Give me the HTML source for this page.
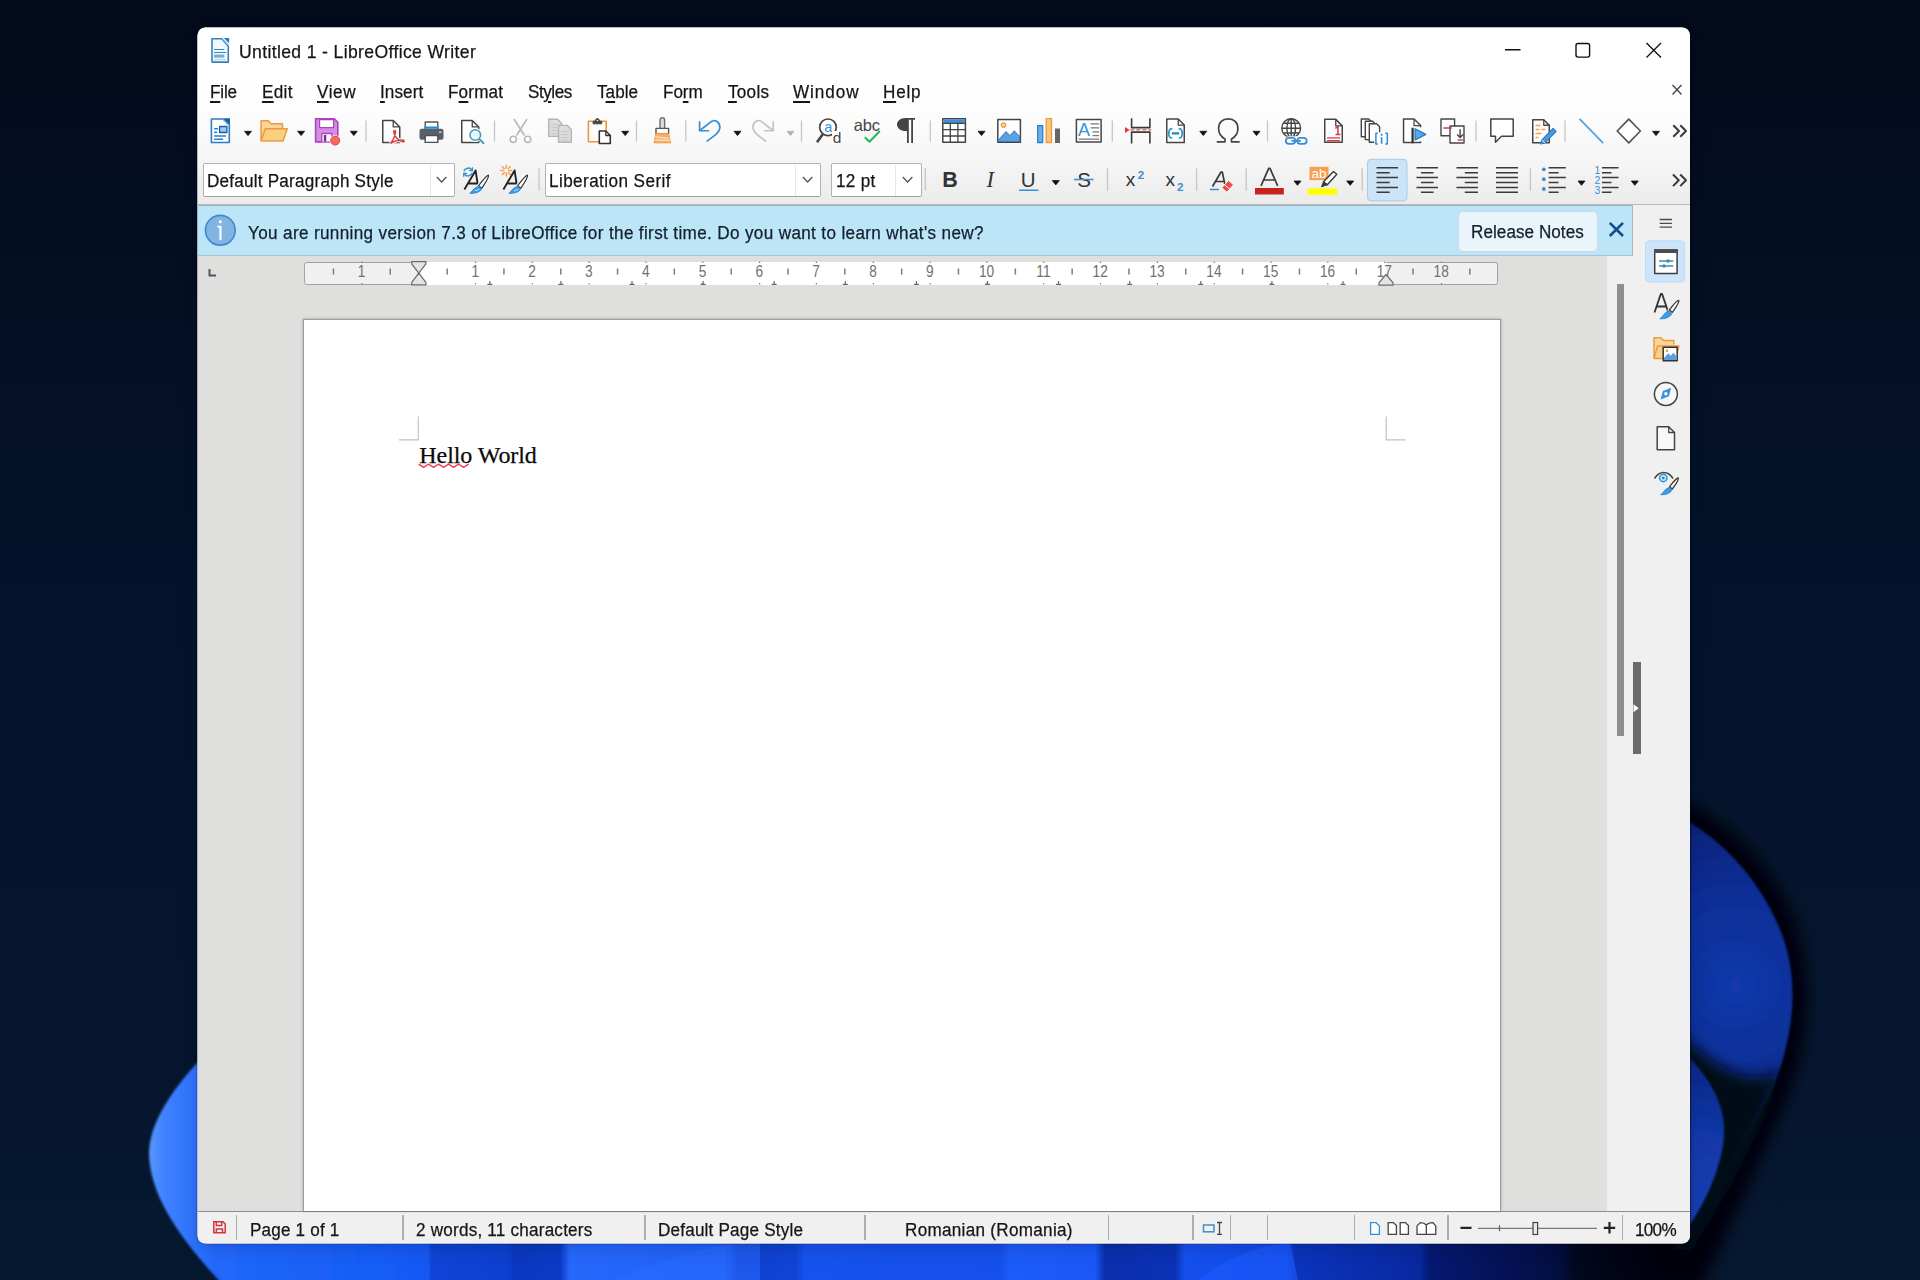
<!DOCTYPE html>
<html lang="en">
<head>
<meta charset="utf-8">
<title>Untitled 1 - LibreOffice Writer</title>
<style>
*{box-sizing:border-box;margin:0;padding:0}
html,body{width:1920px;height:1280px;overflow:hidden;background:#04122a}
body{position:relative;font-family:"Liberation Sans",sans-serif;font-size:18px;color:#1a1a1a}
.abs,.t,.win>*,.combo>*{position:absolute}
#wall{position:absolute;left:0;top:0;width:1920px;height:1280px}
#shadow{position:absolute;left:198px;top:28px;width:1491.5px;height:1215px;border-radius:9px;box-shadow:0 6px 18px 1px rgba(0,0,0,.13),0 0 1.5px .5px rgba(0,0,10,.5)}
.win{position:absolute;left:0;top:0;width:1920px;height:1280px;clip-path:inset(27.5px 230px 36.5px 197.5px round 8px);background:#f0f0f0}
.t{white-space:pre;line-height:22px;height:22px;-webkit-text-stroke:.25px currentColor}
u{text-decoration:underline;text-decoration-thickness:1.5px;text-underline-offset:2.5px}
/* chrome rows */
#titlebar{left:197px;top:27px;width:1494px;height:46px;background:#fff}
#menubar{left:197px;top:73px;width:1494px;height:132px;background:linear-gradient(#fff,#fdfdfd 30%,#f6f6f6 65%,#ebebeb)}
#tools{display:none}
#toolsline{left:197px;top:204px;width:1494px;height:1.5px;background:#b9b9b9}
#infobar{left:197px;top:205px;width:1435px;height:51px;background:#bde5f8}
#docbg{left:197px;top:256px;width:1435px;height:955px;background:#dfdfde}
#sidebar{left:1632px;top:205px;width:59px;height:1006px;background:#f0f0f0;border-left:1px solid #b4b4b4}
#status{left:197px;top:1211px;width:1494px;height:33px;background:#f0f0f0;border-top:1.5px solid #8e8e8e}
.sep{width:1px;background:#c4c4c4}
.ssep{width:1.3px;top:1214.5px;height:25px;background:#adadad}
.combo{background:#fff;border:1px solid #b2b2b2;border-bottom-color:#a2a2a2;border-radius:2px;height:34.5px;top:162.8px}
.combo i{right:0;top:0;width:31px;height:33px;border-left:1px solid #e3e3e3}
svg{position:absolute;overflow:visible}
</style>
</head>
<body>
<!-- WALLPAPER -->
<svg id="wall" viewBox="0 0 1920 1280">
<defs>
<linearGradient id="bgv" x1="0" y1="0" x2="0" y2="1"><stop offset="0" stop-color="#030b1b"/><stop offset=".45" stop-color="#04132b"/><stop offset="1" stop-color="#061730"/></linearGradient>
<linearGradient id="lp" x1="148" y1="0" x2="420" y2="0" gradientUnits="userSpaceOnUse"><stop offset="0" stop-color="#5a98ff"/><stop offset=".06" stop-color="#3f82ff"/><stop offset=".25" stop-color="#2168fc"/><stop offset="1" stop-color="#1459f4"/></linearGradient>
<linearGradient id="bs" x1="229" y1="0" x2="1660" y2="0" gradientUnits="userSpaceOnUse"><stop offset="0.0000" stop-color="#1a5efa"/><stop offset="0.1125" stop-color="#1354f0"/><stop offset="0.1230" stop-color="#0f45d8"/><stop offset="0.1929" stop-color="#0d40d0"/><stop offset="0.1999" stop-color="#0b38c0"/><stop offset="0.2313" stop-color="#0b3ac4"/><stop offset="0.2383" stop-color="#2668fc"/><stop offset="0.3466" stop-color="#1f60f8"/><stop offset="0.3557" stop-color="#0e40cf"/><stop offset="0.3955" stop-color="#0f44d4"/><stop offset="0.4025" stop-color="#1652ee"/><stop offset="0.5388" stop-color="#1650ec"/><stop offset="0.5458" stop-color="#1c5cfa"/><stop offset="0.6052" stop-color="#1a58f6"/><stop offset="0.6122" stop-color="#0a2fae"/><stop offset="0.6611" stop-color="#0b32b6"/><stop offset="0.6681" stop-color="#1550ee"/><stop offset="0.7379" stop-color="#124ae4"/><stop offset="0.7449" stop-color="#0b34bd"/><stop offset="0.8323" stop-color="#08289f"/><stop offset="0.8393" stop-color="#051872"/><stop offset="0.9301" stop-color="#030e40"/><stop offset="0.9406" stop-color="#02081e"/><stop offset="1.0000" stop-color="#02081e" stop-opacity="0"/></linearGradient>
<radialGradient id="rp" cx="1735" cy="985" r="185" gradientUnits="userSpaceOnUse"><stop offset="0" stop-color="#1239aa"/><stop offset=".5" stop-color="#0e2e96"/><stop offset="1" stop-color="#082074"/></radialGradient>
<filter id="b8" x="-40%" y="-40%" width="180%" height="180%"><feGaussianBlur stdDeviation="7"/></filter>
<filter id="b14" x="-40%" y="-40%" width="180%" height="180%"><feGaussianBlur stdDeviation="13"/></filter>
<linearGradient id="rp2" x1="1720" y1="1070" x2="1685" y2="1200" gradientUnits="userSpaceOnUse"><stop offset="0" stop-color="#0a2888"/><stop offset=".5" stop-color="#1238a8"/><stop offset="1" stop-color="#143eb2"/></linearGradient>
<filter id="b5" x="-30%" y="-30%" width="160%" height="160%"><feGaussianBlur stdDeviation="5"/></filter>
<filter id="b2" x="-20%" y="-20%" width="140%" height="140%"><feGaussianBlur stdDeviation="1.2"/></filter>
</defs>
<rect width="1920" height="1280" fill="url(#bgv)"/>
<!-- right petal: soft shadow then petal -->
<path d="M1680 800 C1740 825 1790 885 1802 950 C1812 1000 1805 1050 1788 1095 C1765 1150 1735 1215 1700 1290 L1560 1290 L1560 800Z" fill="#01040e" filter="url(#b8)"/>
<path d="M1680 817 C1725 840 1770 890 1787 950 C1797 990 1793 1030 1778 1075 C1760 1120 1730 1170 1690 1235 L1600 1240 L1600 817Z" fill="url(#rp)" filter="url(#b2)"/>
<path d="M1675 1030 C1715 1066 1750 1092 1782 1068 C1768 1120 1735 1185 1692 1250 L1675 1250Z" fill="#020716" filter="url(#b8)"/>
<path d="M1685 1053 C1712 1080 1729 1110 1723 1145 C1717 1180 1702 1207 1685 1232Z" fill="url(#rp2)" filter="url(#b2)"/>
<!-- bottom strip -->
<rect x="232" y="1230" width="1433" height="60" fill="url(#bs)"/>
<path d="M600 1290 C640 1262 700 1248 760 1240 L760 1290Z" fill="#2a6cff" opacity=".55"/>
<path d="M1190 1290 C1215 1262 1250 1248 1290 1242 L1300 1290Z" fill="#1d5cff" opacity=".6"/>
<!-- left petal -->
<path d="M215 1045 C180 1078 150 1118 149 1152 C149 1195 180 1240 228 1290 L430 1290 L430 1045Z" fill="url(#lp)" filter="url(#b2)"/>
</svg>

<div id="shadow"></div>
<div class="win">
<div id="titlebar"></div>
<div id="menubar"></div>
<div id="tools"></div>
<div id="toolsline"></div>
<div id="infobar"></div>
<div id="docbg"></div>
<div id="sidebar"></div>
<div id="status"></div>
<div class="t" style="left:239.0px;top:39.89px;font-size:18.5px;line-height:23px;height:23px;letter-spacing:0.380px;color:#151515;transform:scaleX(0.95);transform-origin:0 0;">Untitled 1 - LibreOffice Writer</div>
<svg style="left:210px;top:36px" width="22" height="29" viewBox="210 36 22 29"><path d="M212 38.800H221.800L228.300 46.300V62.100H212z" fill="#eef8fe" stroke="#3a7fb8" stroke-width="1.600" stroke-linejoin="round"/><path d="M223.800 38h5.300v5.300z" fill="#2f78b4"/><path d="M222.300 38.500l6.400 7" stroke="#7cc4f2" stroke-width="1.200"/><path d="M214 49.500h10.300M214 52.500h12.300" stroke="#3a86c0" stroke-width="1.200"/><rect x="214" y="54.500" width="10.300" height="3.200" fill="#7fb0d4"/><path d="M214 59.700h12.300" stroke="#a8d4f0" stroke-width="1"/></svg>
<svg style="left:0;top:0" width="1920" height="110"><g stroke="#111" stroke-width="1.4" fill="none"><path d="M1505 49.7h15.5"/><rect x="1576" y="43.5" width="13.6" height="13.6" rx="2"/><path d="M1646.5 43l14.5 14.5M1661 43l-14.500 14.500"/></g><path d="M1672.500 85l9 9.500M1681.500 85l-9 9.500" stroke="#444" stroke-width="1.3" fill="none"/></svg>
<div class="t" style="left:210.0px;top:80.96px;font-size:18px;line-height:22px;height:22px;letter-spacing:-0.198px;color:#151515;transform:scaleX(0.95);transform-origin:0 0;"><u>F</u>ile</div>
<div class="t" style="left:261.9px;top:80.96px;font-size:18px;line-height:22px;height:22px;letter-spacing:0.323px;color:#151515;transform:scaleX(0.95);transform-origin:0 0;"><u>E</u>dit</div>
<div class="t" style="left:316.7px;top:80.96px;font-size:18px;line-height:22px;height:22px;letter-spacing:0.608px;color:#151515;transform:scaleX(0.95);transform-origin:0 0;"><u>V</u>iew</div>
<div class="t" style="left:379.8px;top:80.96px;font-size:18px;line-height:22px;height:22px;letter-spacing:0.088px;color:#151515;transform:scaleX(0.95);transform-origin:0 0;"><u>I</u>nsert</div>
<div class="t" style="left:448.0px;top:80.96px;font-size:18px;line-height:22px;height:22px;letter-spacing:0.176px;color:#151515;transform:scaleX(0.95);transform-origin:0 0;">F<u>o</u>rmat</div>
<div class="t" style="left:528.0px;top:80.96px;font-size:18px;line-height:22px;height:22px;letter-spacing:-0.480px;color:#151515;transform:scaleX(0.95);transform-origin:0 0;">St<u>y</u>les</div>
<div class="t" style="left:597.0px;top:80.96px;font-size:18px;line-height:22px;height:22px;letter-spacing:0.032px;color:#151515;transform:scaleX(0.95);transform-origin:0 0;">T<u>a</u>ble</div>
<div class="t" style="left:663.3px;top:80.96px;font-size:18px;line-height:22px;height:22px;letter-spacing:-0.070px;color:#151515;transform:scaleX(0.95);transform-origin:0 0;">Fo<u>r</u>m</div>
<div class="t" style="left:727.5px;top:80.96px;font-size:18px;line-height:22px;height:22px;letter-spacing:0.282px;color:#151515;transform:scaleX(0.95);transform-origin:0 0;"><u>T</u>ools</div>
<div class="t" style="left:792.5px;top:80.96px;font-size:18px;line-height:22px;height:22px;letter-spacing:0.983px;color:#151515;transform:scaleX(0.95);transform-origin:0 0;"><u>W</u>indow</div>
<div class="t" style="left:883.0px;top:80.96px;font-size:18px;line-height:22px;height:22px;letter-spacing:0.849px;color:#151515;transform:scaleX(0.95);transform-origin:0 0;"><u>H</u>elp</div>
<svg id="tb1" style="left:0;top:100px" width="1920" height="60" viewBox="0 100 1920 60" fill="none" stroke-linejoin="round" stroke-linecap="butt">
<g transform="translate(210.6,118.2)" ><path d="M.8.8H12.500l6.200 6.200V24.300H.8z" fill="#fff" stroke="#2a7fc8" stroke-width="1.600"/><path d="M12 0h7.400v7.400z" fill="#1d5ea6"/><path d="M12.300.5l6.600 6.600" stroke="#6fb2ea" stroke-width="1"/><path d="M3.500 10.500h4M3.500 14h3M3.500 17.800h12M3.500 21h9" stroke="#2a7fc8" stroke-width="1.400"/><rect x="9" y="8.300" width="7.300" height="6" fill="#9ccbf0" stroke="#1d5ea6" stroke-width="1.300"/></g>
<path d="M244.5 131.300h7l-3.500 4.300z" fill="#111" stroke="#111" stroke-width="0.800"/>
<g transform="translate(260,119.7)" ><path d="M1 20.500V1h7.500l2.500 3h11.500v5" fill="#fbd59a" stroke="#ea9a44" stroke-width="1.500"/><path d="M1 21.200L5.300 9h22l-4.300 12.200z" fill="#fbcf82" stroke="#ea9a44" stroke-width="1.500"/></g>
<path d="M297.6 131.300h7l-3.500 4.300z" fill="#111" stroke="#111" stroke-width="0.800"/>
<g transform="translate(314.8,118)" ><path d="M.8.8H19.500l3.500 3.500V23.900H.8z" fill="#d78be4" stroke="#a846b9" stroke-width="1.600"/><rect x="4.800" y="1.600" width="14" height="8" fill="#fff" stroke="#a846b9" stroke-width="1.200"/><path d="M7 23.500v-8h10v8" fill="#fff" stroke="#a846b9" stroke-width="1.300"/><rect x="9" y="17" width="2.500" height="6.500" fill="#7d2d8c"/><circle cx="20.400" cy="22.600" r="5.600" fill="#fff"/><circle cx="20.400" cy="22.600" r="4.500" fill="#f26a62" stroke="#e2453f" stroke-width="1"/></g>
<path d="M350.3 131.300h7l-3.500 4.300z" fill="#111" stroke="#111" stroke-width="0.800"/>
<path d="M366 120.500v21.300" stroke="#c6c6c6" stroke-width="1.300"/>
<g transform="translate(382,119.7)" ><path d="M.75.75H11.25l6.5 6.5V22.75H.75z" fill="#fff" stroke="#444" stroke-width="1.500"/><path d="M11.25 .75v6.5h6.5" stroke="#444" stroke-width="1.300"/><path d="M8.500 23.800c2-2.500 4.500-7 5-11.500c.3-2-2-2-1.800 0c.5 4 4.500 8.500 9 9.800c2 .5 2-1.800 0-1.800c-4.500 0-9.500 1.500-12.200 3.500" stroke="#fff" stroke-width="3.500"/><path d="M8.500 23.800c2-2.500 4.500-7 5-11.500c.3-2-2-2-1.800 0c.5 4 4.500 8.500 9 9.800c2 .5 2-1.800 0-1.800c-4.500 0-9.500 1.500-12.200 3.500" stroke="#e2373f" stroke-width="1.500"/></g>
<g transform="translate(419.5,121.3)" ><rect x="5.700" y=".7" width="12.600" height="8" fill="#fff" stroke="#555" stroke-width="1.400"/><rect x="0" y="7.500" width="24" height="11" rx="2" fill="#5b6067"/><path d="M5 6.300h14" stroke="#1f8fdc" stroke-width="2.400"/><rect x="5.700" y="14.300" width="12.600" height="6.800" fill="#fff" stroke="#4a4f55" stroke-width="1.400"/><path d="M19.500 11h2.500" stroke="#cfd3d8" stroke-width="1.400"/></g>
<g transform="translate(461,119.7)" ><path d="M.75.75H11.25l6.5 6.5V22.75H.75z" fill="#fff" stroke="#444" stroke-width="1.500"/><path d="M11.25 .75v6.5h6.5" stroke="#444" stroke-width="1.300"/><circle cx="14.300" cy="15.300" r="5.300" fill="#fff" stroke="#fff" stroke-width="3.500"/><circle cx="14.300" cy="15.300" r="5.300" fill="#eef8fb" stroke="#3b9fc0" stroke-width="1.600"/><path d="M18.200 19.200l4.800 4.800" stroke="#3b9fc0" stroke-width="2"/></g>
<path d="M494.5 120.500v21.300" stroke="#c6c6c6" stroke-width="1.300"/>
<g transform="translate(509.5,119)" ><path d="M4.500 0L15 16.500M17.500 0L7 16.500" stroke="#b9b9b9" stroke-width="1.700"/><circle cx="3.800" cy="20.300" r="3.100" stroke="#b9b9b9" stroke-width="1.600" fill="#fff"/><circle cx="18.200" cy="20.300" r="3.100" stroke="#b9b9b9" stroke-width="1.600" fill="#fff"/></g>
<g transform="translate(548,118.6)" ><path d="M.7.7H9.500l4 4V17.800H.7z" fill="#dcdcdc" stroke="#b4b4b4" stroke-width="1.400"/><path d="M10.500 6.800h8.800l4 4V23.700H10.500z" fill="#dcdcdc" stroke="#b4b4b4" stroke-width="1.400"/><path d="M3 6h7M3 9h6M3 12h6M3 15h6M12.800 13h8M12.800 16h8M12.800 19h8M12.800 21.700h8" stroke="#c6c6c6" stroke-width="1"/></g>
<g transform="translate(587.6,118)" ><rect x=".8" y="3.300" width="17.800" height="20.500" fill="#fff" stroke="#f0963a" stroke-width="1.600"/><path d="M5.500 5.800V3.200h2.300c0-3.600 4-3.600 4 0h2.300v2.600z" fill="#444" stroke="#444" stroke-width="1"/><circle cx="9.800" cy="2.500" r=".8" fill="#fff"/><path d="M11.700 13h6.500l4.500 4.500v8H11.700z" fill="#fff" stroke="#333" stroke-width="1.600"/><path d="M18.200 13v4.500h4.500" stroke="#333" stroke-width="1.300"/></g>
<path d="M621.7 131.300h7l-3.500 4.300z" fill="#111" stroke="#111" stroke-width="0.800"/>
<path d="M636.5 120.500v21.300" stroke="#c6c6c6" stroke-width="1.300"/>
<g transform="translate(653.3,117.4)" ><path d="M6.700 11V2.500c0-2.800 4.600-2.800 4.600 0V11" fill="#dedede" stroke="#6e6e6e" stroke-width="1.400"/><rect x="2.700" y="11" width="12.600" height="5.200" fill="#fff" stroke="#555" stroke-width="1.400"/><path d="M2.700 16.200h12.600l2 9.200H.7z" fill="#f7b06a" stroke="#f0963a" stroke-width="1"/><path d="M2 19.500l14 1.500M1.300 22.500l15.500.6" stroke="#fbe0c0" stroke-width="1.300"/></g>
<path d="M685.8 120.500v21.300" stroke="#c6c6c6" stroke-width="1.300"/>
<g transform="translate(698.6,119.25)" ><path d="M1 2v9.500h9.500" stroke="#3a8fd4" stroke-width="1.700"/><path d="M1.500 11L12 2.800C16.500-.5 21.300 3 21.300 8.200c0 4.500-4.800 7.800-13.300 14" stroke="#3a8fd4" stroke-width="1.700"/></g>
<path d="M734 131.300h7l-3.500 4.300z" fill="#111" stroke="#111" stroke-width="0.800"/>
<g transform="translate(774.2,119.25) scale(-1,1)"><path d="M1 2v9.500h9.500" stroke="#c4c4c4" stroke-width="1.700"/><path d="M1.500 11L12 2.800C16.500-.5 21.300 3 21.300 8.200c0 4.500-4.800 7.800-13.300 14" stroke="#c4c4c4" stroke-width="1.700"/></g>
<path d="M787 131.300h7l-3.500 4.300z" fill="#b0b0b0" stroke="#b0b0b0" stroke-width="0.800"/>
<path d="M801.5 120.500v21.300" stroke="#c6c6c6" stroke-width="1.300"/>
<g transform="translate(816,118)" ><circle cx="12" cy="9.300" r="8.300" fill="#fff" stroke="#444" stroke-width="1.700"/><path d="M6.800 16.200L1 24.200" stroke="#444" stroke-width="2.600"/><text x="12.200" y="14" font-family="Liberation Sans,sans-serif" font-size="14.500" fill="#3a8fd4" text-anchor="middle">a</text><rect x="16" y="13" width="10" height="13" fill="#fefefe"/><text x="21" y="25.300" font-family="Liberation Sans,sans-serif" font-size="15.500" fill="#444" text-anchor="middle">d</text></g>
<text x="866.7" y="131.3" font-family="Liberation Sans,sans-serif" font-size="16.5" fill="#444" text-anchor="middle" letter-spacing="-.2">abc</text><path d="M864.8 137.200l4.700 4.600l10.300-10.800" stroke="#2db35c" stroke-width="2"/>
<g transform="translate(897,118)" ><path d="M8.500 0H18V1.700H16V25H14.200V1.700H11.800V25H10V13.300C3.500 13.300 0 10.300 0 6.600S3.500 0 8.500 0z" fill="#444"/></g>
<path d="M930.3 120.500v21.300" stroke="#c6c6c6" stroke-width="1.300"/>
<g transform="translate(942,118)" ><rect x=".8" y=".8" width="22.600" height="23.500" fill="#fff" stroke="#444" stroke-width="1.500"/><rect x="1.500" y="1.500" width="21.200" height="3.500" fill="#3a8fda"/><path d="M.8 5.300h22.600M.8 11.700h22.600M.8 18h22.600M8.300 5v19.300M15.900 5v19.300" stroke="#444" stroke-width="1.300"/></g>
<path d="M978 131.300h7l-3.500 4.300z" fill="#111" stroke="#111" stroke-width="0.800"/>
<g transform="translate(997,118.6)" ><rect x=".8" y=".8" width="22.600" height="22.800" fill="#fff" stroke="#444" stroke-width="1.500"/><path d="M1.500 22.900v-1.500L9 13l4 4l4.300-4.800l5.400 5.800v4.900z" fill="#5e9fe2" stroke="#2f7dcc" stroke-width="1"/><circle cx="6.500" cy="6.500" r="2.200" fill="#fbd9a5" stroke="#f0963a" stroke-width="1.300"/></g>
<g transform="translate(1037,118)" ><rect x=".7" y="7.700" width="5" height="16.800" fill="#6fb0ea" stroke="#2a7fc8" stroke-width="1.300"/><rect x="9.200" y=".7" width="5.300" height="23.800" fill="#fac870" stroke="#ea9a44" stroke-width="1.300"/><rect x="18" y="10.500" width="5" height="14.500" fill="#666"/></g>
<g transform="translate(1075.6,118.6)" ><rect x=".8" y=".8" width="24.700" height="22.600" fill="#fff" stroke="#444" stroke-width="1.500"/><text x="8.300" y="17.500" font-family="Liberation Sans,sans-serif" font-size="18" fill="#3a8fd4" text-anchor="middle">A</text><path d="M15 5.300h8.500M15 9.300h8.500M17 13.300h6.500M17 17h6.500M3 20.500h20.500" stroke="#777" stroke-width="1.200"/></g>
<path d="M1112.3 120.500v21.300" stroke="#c6c6c6" stroke-width="1.300"/>
<g transform="translate(1125.3,118.6)" ><path d="M6.300 -.3v9.300h18.300V-.3M6.300 25V13.500h18.300V25" stroke="#3a3a3a" stroke-width="1.600"/><path d="M5 11.300h21" stroke="#e2555a" stroke-width="1.400" stroke-dasharray="4 2"/><path d="M-.3 8.300l4.600 3L-.3 14.300z" fill="#e2373f"/></g>
<g transform="translate(1166,118.3)" ><path d="M.75.75H12.25l6 6V24.25H.75z" fill="#fff" stroke="#444" stroke-width="1.500"/><path d="M12.25 .75v6h6" stroke="#444" stroke-width="1.300"/><path d="M6.300 10.300c-3 0-3.500 1.500-3.500 4.700s.5 4.700 3.500 4.700M12.700 10.300c3 0 3.500 1.500 3.500 4.700s-.5 4.700-3.500 4.700" stroke="#2a8fc0" stroke-width="1.700"/><path d="M5.800 15h7.400" stroke="#2a86b0" stroke-width="2.200"/></g>
<path d="M1199.8 131.300h7l-3.500 4.300z" fill="#111" stroke="#111" stroke-width="0.800"/>
<g transform="translate(1216,118)" ><path d="M.8 23.800H9V21C4.500 18.500 2.600 15 2.600 10.500 2.600 4.500 6.600.9 12.250.9S21.900 4.500 21.900 10.500c0 4.500-1.900 8-6.400 10.500v2.800h8.200" stroke="#444" stroke-width="1.700"/></g>
<path d="M1253 131.300h7l-3.500 4.300z" fill="#111" stroke="#111" stroke-width="0.800"/>
<path d="M1267.5 120.500v21.300" stroke="#c6c6c6" stroke-width="1.300"/>
<g stroke="#444" stroke-width="1.400"><circle cx="1291.200" cy="128.200" r="9.400" fill="#fff"/><ellipse cx="1291.200" cy="128.200" rx="4.300" ry="9.400"/><path d="M1291.200 118.800v18.800M1281.800 128.200h18.800M1283.300 123.300h15.800M1283.300 133h15.800"/></g>
<g><rect x="1284.200" y="136.200" width="24" height="9.200" rx="4.600" fill="#fdfdfd" stroke="none"/><rect x="1285.800" y="137.800" width="9.500" height="6" rx="3" stroke="#3a8fd4" stroke-width="1.800"/><rect x="1297.200" y="137.800" width="9.500" height="6" rx="3" stroke="#3a8fd4" stroke-width="1.800"/><path d="M1291.500 140.800h9.500" stroke="#3a8fd4" stroke-width="1.800"/></g>
<g transform="translate(1324,118.6)" ><path d="M.75.75H11.75l6.5 6.5V23.65H.75z" fill="#fff" stroke="#444" stroke-width="1.500"/><path d="M11.75 .75v6.5h6.5" stroke="#444" stroke-width="1.300"/><path d="M11.300 9.800l2.700-1.800v8M11.500 16h5" stroke="#e2373f" stroke-width="1.500"/><path d="M3 19.300h13M3 22h13" stroke="#e2373f" stroke-width="1.200"/></g>
<g transform="translate(1360.6,118.3)" ><path d="M.7.7h7.300l3 3V18.500H.7z" fill="#fff" stroke="#444" stroke-width="1.400"/><path d="M4.700 3h7.300l3 3V21.300H4.700z" fill="#fff" stroke="#444" stroke-width="1.400"/><path d="M8.700 5.500h7.300l3 3V24H8.700z" fill="#fff" stroke="#444" stroke-width="1.400"/><rect x="13.500" y="14" width="14" height="12.500" fill="#fefefe"/><path d="M17.300 15H15.300v10.800h2M24.700 15h2v10.800h-2" stroke="#2a8fd4" stroke-width="1.500"/><path d="M21 19v6.500M21 15.500v2" stroke="#2a8fd4" stroke-width="1.700"/></g>
<g transform="translate(1402.8,118.3)" ><path d="M.75.75H11.25l6.5 6.5V24.25H.75z" fill="#fff" stroke="#444" stroke-width="1.500"/><path d="M11.25 .75v6.5h6.5" stroke="#444" stroke-width="1.300"/><rect x="9.500" y="9" width="14.500" height="14" fill="#fefefe"/><path d="M9.800 9.500v15.500" stroke="#2b2b2b" stroke-width="2.200"/><path d="M12.300 10.500l10.700 5.500l-10.700 5.500z" fill="#5ea8ea" stroke="#2a7fc8" stroke-width="1.400"/></g>
<g transform="translate(1440.3,118.3)" ><rect x=".7" y=".7" width="13.600" height="16.800" fill="#fff" stroke="#444" stroke-width="1.400"/><rect x="9.700" y="7.700" width="14" height="17" fill="#fff" stroke="#444" stroke-width="1.400"/><path d="M3 9.700h8.500M17.500 21.700h5" stroke="#e2373f" stroke-width="1.600"/><path d="M19.800 11v8M16.800 16.200l3 3l3-3" stroke="#444" stroke-width="1.400"/></g>
<path d="M1476 120.500v21.300" stroke="#c6c6c6" stroke-width="1.300"/>
<g transform="translate(1490,118.3)" ><path d="M.8.8H23.200V18H11.500L5.500 24V18H.8z" fill="#fff" stroke="#444" stroke-width="1.500"/></g>
<g transform="translate(1532,119)" ><path d="M.75.75H11.75l5.5 5.5V23.75H.75z" fill="#fff" stroke="#444" stroke-width="1.500"/><path d="M11.75 .75v5.5h5.5" stroke="#444" stroke-width="1.300"/><path d="M3.500 6.500h5M3.500 10.500h4M9.500 10.500h4M3.500 14.500h6M3.500 18.500h3" stroke="#f0a050" stroke-width="1.300"/><path d="M21 9.500l3 3L12.500 24l-3.800 1l1-3.800z" fill="#4a9be0" stroke="#2a7fc8" stroke-width="1.200"/><path d="M10 21l3 3" stroke="#fff" stroke-width=".8"/></g>
<path d="M1565 120.500v21.300" stroke="#c6c6c6" stroke-width="1.300"/>
<path d="M1579.500 118.800l23.700 24.400" stroke="#4fa3de" stroke-width="1.700"/>
<path d="M1628.800 119.200l11.600 11.800l-11.600 11.800L1617.200 131z" stroke="#555" stroke-width="1.700" fill="#fff"/>
<path d="M1652.5 131.300h7l-3.500 4.300z" fill="#111" stroke="#111" stroke-width="0.800"/>
<path d="M1673.300 125.300l5.700 5.700l-5.700 5.700M1680.300 125.300l5.700 5.700l-5.700 5.700" stroke="#3a3a3a" stroke-width="2"/>
</svg>
<div class="combo" style="left:202.5px;width:252.5px"><b style="left:226.0px;top:1px;width:1px;height:31px;background:#e6e6e6"></b></div>
<svg style="left:436px;top:176px" width="12" height="8" viewBox="0 0 12 8"><path d="M.8 1l4.800 5l4.800-5" stroke="#555" stroke-width="1.300" fill="none"/></svg>
<div class="combo" style="left:544.5px;width:276.5px"><b style="left:249.5px;top:1px;width:1px;height:31px;background:#e6e6e6"></b></div>
<svg style="left:801.6px;top:176px" width="12" height="8" viewBox="0 0 12 8"><path d="M.8 1l4.800 5l4.800-5" stroke="#555" stroke-width="1.300" fill="none"/></svg>
<div class="combo" style="left:831px;width:90.5px"><b style="left:63px;top:1px;width:1px;height:31px;background:#e6e6e6"></b></div>
<svg style="left:901.6px;top:176px" width="12" height="8" viewBox="0 0 12 8"><path d="M.8 1l4.800 5l4.800-5" stroke="#555" stroke-width="1.300" fill="none"/></svg>
<div class="t" style="left:206.7px;top:170.06px;font-size:18px;line-height:22px;height:22px;letter-spacing:0.237px;color:#151515;transform:scaleX(0.95);transform-origin:0 0;">Default Paragraph Style</div>
<div class="t" style="left:548.7px;top:170.06px;font-size:18px;line-height:22px;height:22px;letter-spacing:0.454px;color:#151515;transform:scaleX(0.95);transform-origin:0 0;">Liberation Serif</div>
<div class="t" style="left:836.2px;top:170.06px;font-size:18px;line-height:22px;height:22px;letter-spacing:0.304px;color:#151515;transform:scaleX(0.95);transform-origin:0 0;">12 pt</div>
<svg id="tb2" style="left:0;top:150px" width="1920" height="60" viewBox="0 150 1920 60" fill="none" stroke-linejoin="round">
<g transform="translate(461.5,167.5)" ><path d="M2.900 21.900L14.100 2.900L16.300 17.500M7.300 16H16" stroke="#222" stroke-width="1.900"/><path d="M27 7.600C28 9.500 24 15 20.300 20.700L17 18.300C21 13 25 8 27 7.600z" fill="#fff" stroke="#fdfdfd" stroke-width="3.500"/><path d="M27 7.600C28 9.500 24 15 20.300 20.700L17 18.300C21 13 25 8 27 7.600z" fill="#fff" stroke="#3a3a3a" stroke-width="1.300"/><path d="M17.300 19L20.300 21.300C19 24.500 13 26.500 8.300 25.800C11 23.500 13 19.500 17.300 19z" fill="#3d9ce2" stroke="#2a7fc8" stroke-width=".8"/><path d="M13.500 23.300l4.500-1.500" stroke="#bfe3f8" stroke-width="1"/><path d="M2.300 3.800a4.700 4.700 0 0 1 8.200-1.300M11 5.200a4.700 4.700 0 0 1-8.200 1.300" stroke="#2f95d0" stroke-width="1.500"/><path d="M11-.2v3.300H7.700M2.200 9.200V5.900h3.300" stroke="#2f95d0" stroke-width="1.300"/></g>
<g transform="translate(500.5,167.5)" ><path d="M2.900 21.900L14.100 2.900L16.300 17.500M7.300 16H16" stroke="#222" stroke-width="1.900"/><path d="M27 7.600C28 9.500 24 15 20.300 20.700L17 18.300C21 13 25 8 27 7.600z" fill="#fff" stroke="#fdfdfd" stroke-width="3.500"/><path d="M27 7.600C28 9.500 24 15 20.300 20.700L17 18.300C21 13 25 8 27 7.600z" fill="#fff" stroke="#3a3a3a" stroke-width="1.300"/><path d="M17.300 19L20.300 21.300C19 24.500 13 26.500 8.300 25.800C11 23.500 13 19.500 17.300 19z" fill="#3d9ce2" stroke="#2a7fc8" stroke-width=".8"/><path d="M13.500 23.300l4.500-1.500" stroke="#bfe3f8" stroke-width="1"/><g stroke="#f5a14f" stroke-width="1.500"><path d="M5.800 -2.800v4M5.800 5v4M-.2 3.100h4M7.700 3.100h4M1.500 -1.200l2.700 2.700M7.400 4.700l2.700 2.700M10.100 -1.200L7.400 1.500M4.200 4.700L1.500 7.400"/></g></g>
<path d="M539 168.300v22.500" stroke="#c6c6c6" stroke-width="1.300"/>
<path d="M925.3 168.300v22.500" stroke="#c6c6c6" stroke-width="1.300"/>
<text x="950" y="187.200" font-family="Liberation Sans,sans-serif" font-size="21.500" font-weight="bold" fill="#333" text-anchor="middle">B</text>
<text x="990.300" y="187.200" font-family="Liberation Serif,serif" font-size="22.500" font-style="italic" fill="#333" text-anchor="middle">I</text>
<text x="1028.200" y="186.700" font-family="Liberation Sans,sans-serif" font-size="20.500" fill="#333" text-anchor="middle">U</text><path d="M1019 190.300h19.500" stroke="#3a8fd4" stroke-width="1.600"/>
<path d="M1052.3 180.6h7l-3.500 4.300z" fill="#111" stroke="#111" stroke-width="0.800"/>
<text x="1084" y="187.200" font-family="Liberation Sans,sans-serif" font-size="20.500" fill="#333" text-anchor="middle">S</text><path d="M1074 179.500h19.500" stroke="#3a8fd4" stroke-width="1.600"/>
<path d="M1107.5 168.300v22.500" stroke="#c6c6c6" stroke-width="1.300"/>
<text x="1130.500" y="186.300" font-family="Liberation Sans,sans-serif" font-size="19" fill="#333" text-anchor="middle">x</text><text x="1141" y="179" font-family="Liberation Sans,sans-serif" font-size="11.500" font-weight="bold" fill="#3a8fd4" text-anchor="middle">2</text>
<text x="1170.300" y="186.300" font-family="Liberation Sans,sans-serif" font-size="19" fill="#333" text-anchor="middle">x</text><text x="1180.200" y="190.500" font-family="Liberation Sans,sans-serif" font-size="11.500" font-weight="bold" fill="#3a8fd4" text-anchor="middle">2</text>
<path d="M1196.6 168.300v22.500" stroke="#c6c6c6" stroke-width="1.300"/>
<path d="M1212.500 186.500l8.500-14.500h1.300l3 14.500M1215.500 181.500h9" stroke="#3a3a3a" stroke-width="1.700"/><path d="M1210 189.600h9" stroke="#3a8fd4" stroke-width="1.500"/>
<path d="M1228.500 180.300l5 4.500l-6.500 7.500l-5.300-4.500z" fill="#ee4a46" stroke="#fff" stroke-width="1"/><path d="M1224.300 184.500l5.300 4.500" stroke="#fff" stroke-width="1"/>
<path d="M1246.2 168.300v22.500" stroke="#c6c6c6" stroke-width="1.300"/>
<path d="M1261 185.800l7.700-17.500h1.300l7.700 17.500M1264 180h10.500" stroke="#3a3a3a" stroke-width="1.700"/><rect x="1255" y="188" width="28.800" height="6.500" fill="#c9211e"/>
<path d="M1294 181h7l-3.500 4.300z" fill="#111" stroke="#111" stroke-width="0.800"/>
<rect x="1309.500" y="166.800" width="19" height="13.300" fill="#f7a04f"/><text x="1319" y="178.300" font-family="Liberation Sans,sans-serif" font-size="13.500" fill="#fff" text-anchor="middle">ab</text>
<path d="M1333.500 171.500l3.300 2.800l-9.500 10.500l-3.800-3z" fill="#fff" stroke="#3a3a3a" stroke-width="1.400"/><path d="M1323.500 181.800l3.800 3l-5.800 2z" fill="#3a3a3a" stroke="#3a3a3a" stroke-width="1"/><rect x="1307.800" y="188.300" width="29.200" height="6.500" fill="#ffff00"/>
<path d="M1346.7 181h7l-3.500 4.300z" fill="#111" stroke="#111" stroke-width="0.800"/>
<path d="M1362.2 168.300v22.500" stroke="#c6c6c6" stroke-width="1.300"/>
<rect x="1367.500" y="159.300" width="39.500" height="41.500" rx="3.500" fill="#cce4f7" stroke="#a5cdec" stroke-width="1"/>
<path d="M1376.5 167.8H1398M1376.5 172.7H1389.7M1376.5 177.6H1398M1376.5 182.5H1389.7M1376.5 187.4H1398M1376.5 192.3H1389.7" stroke="#3a3a3a" stroke-width="1.500"/>
<path d="M1416.5 167.8H1438M1421 172.7H1433.6M1416.5 177.6H1438M1421 182.5H1433.6M1416.5 187.4H1438M1421 192.3H1433.6" stroke="#3a3a3a" stroke-width="1.500"/>
<path d="M1456.5 167.8H1478M1464.8 172.7H1478M1456.5 177.6H1478M1464.8 182.5H1478M1456.5 187.4H1478M1464.8 192.3H1478" stroke="#3a3a3a" stroke-width="1.500"/>
<path d="M1496 167.8H1518M1496 172.7H1518M1496 177.6H1518M1496 182.5H1518M1496 187.4H1518M1496 192.3H1518" stroke="#3a3a3a" stroke-width="1.500"/>
<path d="M1530.4 168.300v22.500" stroke="#c6c6c6" stroke-width="1.300"/>
<path d="M1548.600 167.8H1565.8M1548.600 172.7H1558.6M1548.600 177.6H1565.8M1548.600 182.5H1558.6M1548.600 187.4H1565.8M1548.600 192.3H1558.6" stroke="#3a3a3a" stroke-width="1.500"/>
<circle cx="1543.800" cy="169.3" r="1.900" fill="#3a8fd4"/>
<circle cx="1543.800" cy="179.2" r="1.900" fill="#3a8fd4"/>
<circle cx="1543.800" cy="189" r="1.900" fill="#3a8fd4"/>
<path d="M1578 181h7l-3.500 4.300z" fill="#111" stroke="#111" stroke-width="0.800"/>
<path d="M1602 167.8H1618.5M1602 172.7H1611.5M1602 177.6H1618.5M1602 182.5H1611.5M1602 187.4H1618.5M1602 192.3H1611.5" stroke="#3a3a3a" stroke-width="1.500"/>
<text x="1597.300" y="174" font-family="Liberation Sans,sans-serif" font-size="10.500" fill="#3a8fd4" text-anchor="middle">1</text>
<text x="1597.300" y="184" font-family="Liberation Sans,sans-serif" font-size="10.500" fill="#3a8fd4" text-anchor="middle">2</text>
<text x="1597.300" y="194" font-family="Liberation Sans,sans-serif" font-size="10.500" fill="#3a8fd4" text-anchor="middle">3</text>
<path d="M1631.3 181h7l-3.500 4.300z" fill="#111" stroke="#111" stroke-width="0.800"/>
<path d="M1673 174.500l5.800 5.800l-5.800 5.800M1680.200 174.500l5.800 5.800l-5.800 5.800" stroke="#3a3a3a" stroke-width="2"/>
</svg>
<div style="left:197px;top:205px;width:1435px;height:1px;background:#9fb3bf"></div><div style="left:197px;top:255px;width:1435px;height:1px;background:#a9c3d2"></div>
<svg style="left:204px;top:214px" width="33" height="33" viewBox="0 0 33 33"><circle cx="16.3" cy="16.3" r="14.9" fill="#7fb4e3" stroke="#3f89cc" stroke-width="1.6"/><rect x="15.400" y="11.800" width="2.100" height="14.500" rx="1" fill="#fff"/><path d="M13.300 12.600h3.500" stroke="#fff" stroke-width="1.600"/><circle cx="16.300" cy="7.800" r="1.500" fill="#fff"/></svg>
<div class="t" style="left:247.5px;top:221.56px;font-size:18px;line-height:22px;height:22px;letter-spacing:0.376px;color:#12202b;transform:scaleX(0.95);transform-origin:0 0;">You are running version 7.3 of LibreOffice for the first time. Do you want to learn what&#x27;s new?</div>
<div style="left:1457.500px;top:210.500px;width:140px;height:41px;border-radius:5px;background:#e9f4fb;border:1px solid #c3dbea"></div>
<div class="t" style="left:1471.4px;top:220.56px;font-size:18px;line-height:22px;height:22px;letter-spacing:0.055px;color:#12202b;transform:scaleX(0.95);transform-origin:0 0;">Release Notes</div>
<svg style="left:0;top:0" width="1920" height="300"><path d="M1609.800 222.800l13.200 13.200M1623 222.800l-13.200 13.200" stroke="#0f4f90" stroke-width="2.600" fill="none"/></svg>
<svg id="ruler" style="left:0;top:0" width="1920" height="330" viewBox="0 0 1920 330">
<rect x="304.5" y="262.5" width="1193" height="22" rx="2" fill="#f0f0f0" stroke="#a3a3a3"/>
<rect x="418.8" y="262" width="967.6" height="23" fill="#fff"/>
<g fill="#7d7d7d">
<rect x="332.7" y="268.5" width="1.5" height="6"/>
<rect x="361.3" y="261.6" width="1.2" height="1.4"/><rect x="361.3" y="283" width="1.2" height="1.4"/>
<rect x="389.5" y="268.5" width="1.5" height="6"/>
<rect x="446.4" y="268.5" width="1.5" height="6"/>
<rect x="474.9" y="261.6" width="1.2" height="1.4"/><rect x="474.9" y="283" width="1.2" height="1.4"/>
<rect x="503.2" y="268.5" width="1.5" height="6"/>
<rect x="531.7" y="261.6" width="1.2" height="1.4"/><rect x="531.7" y="283" width="1.2" height="1.4"/>
<rect x="560.0" y="268.5" width="1.5" height="6"/>
<rect x="588.6" y="261.6" width="1.2" height="1.4"/><rect x="588.6" y="283" width="1.2" height="1.4"/>
<rect x="616.8" y="268.5" width="1.5" height="6"/>
<rect x="645.4" y="261.6" width="1.2" height="1.4"/><rect x="645.4" y="283" width="1.2" height="1.4"/>
<rect x="673.6" y="268.5" width="1.5" height="6"/>
<rect x="702.2" y="261.6" width="1.2" height="1.4"/><rect x="702.2" y="283" width="1.2" height="1.4"/>
<rect x="730.5" y="268.5" width="1.5" height="6"/>
<rect x="759.0" y="261.6" width="1.2" height="1.4"/><rect x="759.0" y="283" width="1.2" height="1.4"/>
<rect x="787.3" y="268.5" width="1.5" height="6"/>
<rect x="815.8" y="261.6" width="1.2" height="1.4"/><rect x="815.8" y="283" width="1.2" height="1.4"/>
<rect x="844.1" y="268.5" width="1.5" height="6"/>
<rect x="872.7" y="261.6" width="1.2" height="1.4"/><rect x="872.7" y="283" width="1.2" height="1.4"/>
<rect x="900.9" y="268.5" width="1.5" height="6"/>
<rect x="929.5" y="261.6" width="1.2" height="1.4"/><rect x="929.5" y="283" width="1.2" height="1.4"/>
<rect x="957.7" y="268.5" width="1.5" height="6"/>
<rect x="986.3" y="261.6" width="1.2" height="1.4"/><rect x="986.3" y="283" width="1.2" height="1.4"/>
<rect x="1014.6" y="268.5" width="1.5" height="6"/>
<rect x="1043.1" y="261.6" width="1.2" height="1.4"/><rect x="1043.1" y="283" width="1.2" height="1.4"/>
<rect x="1071.4" y="268.5" width="1.5" height="6"/>
<rect x="1099.9" y="261.6" width="1.2" height="1.4"/><rect x="1099.9" y="283" width="1.2" height="1.4"/>
<rect x="1128.2" y="268.5" width="1.5" height="6"/>
<rect x="1156.8" y="261.6" width="1.2" height="1.4"/><rect x="1156.8" y="283" width="1.2" height="1.4"/>
<rect x="1185.0" y="268.5" width="1.5" height="6"/>
<rect x="1213.6" y="261.6" width="1.2" height="1.4"/><rect x="1213.6" y="283" width="1.2" height="1.4"/>
<rect x="1241.8" y="268.5" width="1.5" height="6"/>
<rect x="1270.4" y="261.6" width="1.2" height="1.4"/><rect x="1270.4" y="283" width="1.2" height="1.4"/>
<rect x="1298.7" y="268.5" width="1.5" height="6"/>
<rect x="1327.2" y="261.6" width="1.2" height="1.4"/><rect x="1327.2" y="283" width="1.2" height="1.4"/>
<rect x="1355.5" y="268.5" width="1.5" height="6"/>
<rect x="1384.0" y="261.6" width="1.2" height="1.4"/><rect x="1384.0" y="283" width="1.2" height="1.4"/>
<rect x="1412.3" y="268.5" width="1.5" height="6"/>
<rect x="1440.9" y="261.6" width="1.2" height="1.4"/><rect x="1440.9" y="283" width="1.2" height="1.4"/>
<rect x="1469.1" y="268.5" width="1.5" height="6"/>
</g>
<g font-family="Liberation Sans, sans-serif" font-size="16.300" fill="#707070" text-anchor="middle">
<text transform="translate(361.6,276.700) scale(.84,1)">1</text>
<text transform="translate(475.2,276.700) scale(.84,1)">1</text>
<text transform="translate(532.0,276.700) scale(.84,1)">2</text>
<text transform="translate(588.9,276.700) scale(.84,1)">3</text>
<text transform="translate(645.7,276.700) scale(.84,1)">4</text>
<text transform="translate(702.5,276.700) scale(.84,1)">5</text>
<text transform="translate(759.3,276.700) scale(.84,1)">6</text>
<text transform="translate(816.1,276.700) scale(.84,1)">7</text>
<text transform="translate(873.0,276.700) scale(.84,1)">8</text>
<text transform="translate(929.8,276.700) scale(.84,1)">9</text>
<text transform="translate(986.6,276.700) scale(.84,1)">10</text>
<text transform="translate(1043.4,276.700) scale(.84,1)">11</text>
<text transform="translate(1100.2,276.700) scale(.84,1)">12</text>
<text transform="translate(1157.1,276.700) scale(.84,1)">13</text>
<text transform="translate(1213.9,276.700) scale(.84,1)">14</text>
<text transform="translate(1270.7,276.700) scale(.84,1)">15</text>
<text transform="translate(1327.5,276.700) scale(.84,1)">16</text>
<text transform="translate(1384.3,276.700) scale(.84,1)">17</text>
<text transform="translate(1441.2,276.700) scale(.84,1)">18</text>
</g>
<g stroke="#6a6a6a" stroke-width="1.2" fill="none">
<path d="M489.8 281v3.5M487.3 284.4h5"/>
<path d="M560.9 281v3.5M558.4 284.4h5"/>
<path d="M632.0 281v3.5M629.5 284.4h5"/>
<path d="M703.1 281v3.5M700.6 284.4h5"/>
<path d="M774.2 281v3.5M771.7 284.4h5"/>
<path d="M845.3 281v3.5M842.8 284.4h5"/>
<path d="M916.4 281v3.5M913.9 284.4h5"/>
<path d="M987.5 281v3.5M985.0 284.4h5"/>
<path d="M1058.6 281v3.5M1056.1 284.4h5"/>
<path d="M1129.7 281v3.5M1127.2 284.4h5"/>
<path d="M1200.8 281v3.5M1198.3 284.4h5"/>
<path d="M1271.9 281v3.5M1269.4 284.4h5"/>
<path d="M1343.0 281v3.5M1340.5 284.4h5"/>
</g>
<g fill="#e4e4e4" stroke="#6f6f6f" stroke-width="1.3" stroke-linejoin="round">
<path d="M411.6 261.6h14.4l-0.3 2.6-6.9 9 -6.9-9z"/>
<path d="M418.8 273.2l6.9 9 .3 2.6h-14.4l.3-2.6z"/>
<path d="M1386 274.5l6.9 8.2 .3 2.4h-14.4l.3-2.4z"/>
</g>
<path d="M209.5 269v6.5h6.5" stroke="#555" stroke-width="2" fill="none"/>
</svg>
<div id="page" style="left:303px;top:319px;width:1198px;height:892px;background:#fff;border:1px solid #9d9d9d;border-bottom:0;box-shadow:0 0 3px rgba(0,0,0,.28)"></div>
<svg style="left:0;top:0" width="1920" height="500"><path d="M399 439.800h19.300V416.500M1405.500 439.800h-19.300V416.500" stroke="#c2c2c2" stroke-width="1.200" fill="none"/></svg>
<div class="t" id="hello" style="left:419.300px;top:440.500px;font:24px/28px 'Liberation Serif',serif;height:28px;color:#0b0b0b;letter-spacing:-.07px">Hello World</div>
<svg style="left:0;top:0" width="1920" height="500"><path d="M418.6 464.2L423.6 467.4L428.6 464.2L433.6 467.4L438.6 464.2L443.6 467.4L448.6 464.2L453.6 467.4L458.6 464.2L463.6 467.4L468.6 464.2" stroke="#ee3f4e" stroke-width="1.400" fill="none" stroke-linejoin="round"/></svg>
<div style="left:1607px;top:256px;width:26px;height:955px;background:#f0f0f0"></div>
<div style="left:1617px;top:284px;width:7px;height:452px;background:#8e8e8e"></div>
<div style="left:1632.500px;top:662px;width:8.200px;height:92px;background:#6b6b6b"></div>
<svg id="side" style="left:1630px;top:200px" width="65" height="600" viewBox="1630 200 65 600" fill="none" stroke-linejoin="round">
<path d="M1633.500 704.200l5.300 4l-5.300 4z" fill="#fff"/>
<path d="M1659.700 219.500h12.200M1659.700 223.300h12.200M1659.700 227.100h12.200" stroke="#4a4a4a" stroke-width="1.300"/>
<rect x="1645.500" y="240.800" width="39.200" height="41.300" rx="4" fill="#cde5fa" stroke="#bcdaf3" stroke-width="1"/>
<rect x="1654.700" y="249.900" width="22.400" height="23.500" fill="#fff" stroke="#3d3d3d" stroke-width="1.500"/><rect x="1654" y="249.200" width="23.800" height="3.800" fill="#4d4d4d"/>
<path d="M1659 261h14.300M1659 266h14.300" stroke="#3a8fb0" stroke-width="1.500"/><circle cx="1668" cy="261" r="1.800" fill="#3a8fb0"/><circle cx="1664" cy="266" r="1.800" fill="#3a8fb0"/>
<path d="M1654.500 312.500l6.300-18.500h1.300l6.300 18.500M1656.800 306.500h9.500" stroke="#333" stroke-width="1.800"/>
<path d="M1678.800 300.300c.8 1.800-2 6-6.500 12l-3-2.300c4.500-6 7.700-9.700 9.500-9.700z" fill="#fff" stroke="#f0f0f0" stroke-width="3.500"/><path d="M1678.800 300.300c.8 1.800-2 6-6.500 12l-3-2.300c4.500-6 7.700-9.700 9.500-9.700z" fill="#fff" stroke="#3a3a3a" stroke-width="1.300"/><path d="M1669 311l3 2.300c-1 3.500-7 6-12.200 5.500c3.500-2 4.500-7 9.200-7.800z" fill="#3d9ce2" stroke="#2a7fc8" stroke-width=".8"/>
<path d="M1654 358V337.700h7l2.300 2.800h10.500v4" fill="#fbd59a" stroke="#ea9a44" stroke-width="1.400"/><path d="M1654 358.500l3.500-12.500h21.500l-3.500 12.500z" fill="#fbcf82" stroke="#ea9a44" stroke-width="1.400"/>
<rect x="1663.200" y="347.300" width="14" height="13.500" fill="#fff" stroke="#333" stroke-width="1.500"/><path d="M1664 360v-2l4.300-4.800l2.400 2.500l2.600-3l3.200 3.500v3.800z" fill="#5e9fe2"/><circle cx="1667" cy="350.800" r="1.200" fill="#f0963a"/>
<circle cx="1665.900" cy="394" r="11.500" fill="#f6f6f6" stroke="#444" stroke-width="1.500"/><path d="M1671.200 387.800l-2.300 8.500l-8.300 3.200l2.300-8.500z" fill="#3a8fe0"/><circle cx="1665.900" cy="393.700" r="1.700" fill="#fff"/>
<path d="M1657.200 426.700h11.500l5.800 5.800v17.200h-17.300z" fill="#f8f8f8" stroke="#444" stroke-width="1.500"/><path d="M1668.700 426.700v5.800h5.800" stroke="#444" stroke-width="1.300"/>
<path d="M1654.500 478.500c5-8 13.500-8 18.500 0" stroke="#444" stroke-width="1.500"/><circle cx="1663.300" cy="478" r="3.700" fill="#bfe0f7" stroke="#2a8fd4" stroke-width="1.400"/><circle cx="1663.300" cy="478" r="1.300" fill="#2a7fc8"/>
<path d="M1678.300 478c.8 1.700-1.700 5.300-6 11l-2.800-2.200c4.300-5.700 7-8.800 8.800-8.800z" fill="#fff" stroke="#f0f0f0" stroke-width="3.500"/><path d="M1678.300 478c.8 1.700-1.700 5.300-6 11l-2.800-2.200c4.300-5.700 7-8.800 8.800-8.800z" fill="#fff" stroke="#3a3a3a" stroke-width="1.300"/><path d="M1669.300 487.500l2.800 2.200c-1 3.200-6.500 5.500-11.500 5c3.300-1.800 4.200-6.500 8.700-7.200z" fill="#3d9ce2" stroke="#2a7fc8" stroke-width=".8"/>
</svg>
<div class="ssep" style="left:235.75px"></div>
<div class="ssep" style="left:402.25px"></div>
<div class="ssep" style="left:644.25px"></div>
<div class="ssep" style="left:864.25px"></div>
<div class="ssep" style="left:1107.75px"></div>
<div class="ssep" style="left:1192.25px"></div>
<div class="ssep" style="left:1229.55px"></div>
<div class="ssep" style="left:1267.05px"></div>
<div class="ssep" style="left:1353.95px"></div>
<div class="ssep" style="left:1447.45px"></div>
<div class="ssep" style="left:1621.75px"></div>
<div class="t" style="left:249.5px;top:1219.16px;font-size:18px;line-height:22px;height:22px;letter-spacing:0.192px;color:#151515;transform:scaleX(0.95);transform-origin:0 0;">Page 1 of 1</div>
<div class="t" style="left:415.5px;top:1219.16px;font-size:18px;line-height:22px;height:22px;letter-spacing:0.230px;color:#151515;transform:scaleX(0.95);transform-origin:0 0;">2 words, 11 characters</div>
<div class="t" style="left:658.0px;top:1219.16px;font-size:18px;line-height:22px;height:22px;letter-spacing:0.208px;color:#151515;transform:scaleX(0.95);transform-origin:0 0;">Default Page Style</div>
<div class="t" style="left:905.0px;top:1219.16px;font-size:18px;line-height:22px;height:22px;letter-spacing:0.308px;color:#151515;transform:scaleX(0.95);transform-origin:0 0;">Romanian (Romania)</div>
<div class="t" style="left:1635.0px;top:1219.16px;font-size:18px;line-height:22px;height:22px;letter-spacing:-0.752px;color:#151515;transform:scaleX(0.95);transform-origin:0 0;">100%</div>
<svg style="left:0;top:1200px" width="1920" height="80" viewBox="0 1200 1920 80">
<g fill="none" stroke="#d6353b" stroke-width="1.500"><path d="M213.800 1221.800h9.200l2.200 2.200v8.800h-11.400z"/><path d="M216.300 1222v3.600h5.400V1222M216.300 1232.800v-3.800h6.200v3.800"/></g>
<rect x="1203.500" y="1225" width="10.500" height="6.800" fill="none" stroke="#3a8fc8" stroke-width="1.500"/>
<path d="M1217 1222.500h5M1217 1234.300h5M1219.500 1222.500v11.800" stroke="#444" stroke-width="1.300" fill="none"/>
<path d="M1370.600 1222.600h5.400l3.400 3.400v8.300h-8.800z" fill="#fff" stroke="#2f8fd0" stroke-width="1.300"/>
<g fill="#fff" stroke="#444" stroke-width="1.300"><path d="M1388.200 1222.600h5.200l3 3v8.700h-8.200zM1400.200 1222.600h5.200l3 3v8.700h-8.200z"/>
<path d="M1426.300 1225c-1.500-1.800-4-2.400-6-2.400l-3.300 3.300v8.400h9.300zM1426.300 1225c1.500-1.800 4-2.400 6.500-2.400l3 3.300v8.400h-9.500z"/></g>
<path d="M1460.500 1227.800h11" stroke="#222" stroke-width="2.200"/>
<path d="M1478 1228.300h119" stroke="#777" stroke-width="1.200"/><path d="M1499.500 1225.300v6" stroke="#666" stroke-width="1.300"/>
<rect x="1533" y="1222.500" width="4.600" height="12" fill="#e8e8e8" stroke="#444" stroke-width="1.200"/>
<path d="M1603.800 1227.800h11.400M1609.500 1222.100v11.400" stroke="#222" stroke-width="2.200"/>
</svg>
</div>
</body>
</html>
